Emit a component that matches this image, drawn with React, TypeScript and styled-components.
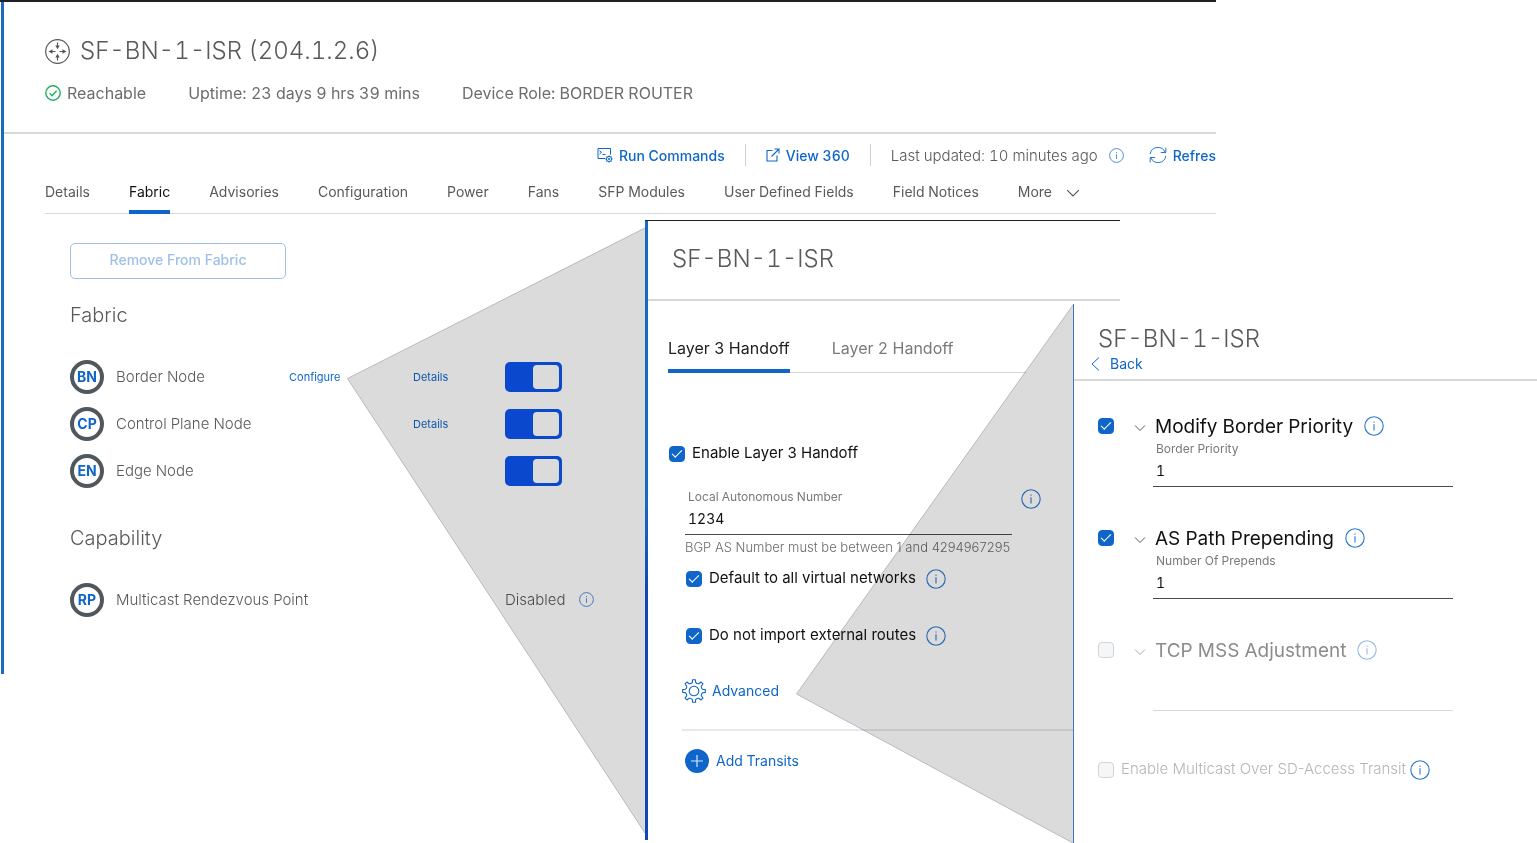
import React from 'react';
import styled, { createGlobalStyle, css } from 'styled-components';

const blue = '#0f66c8';

const Global = createGlobalStyle`
  *, *::before, *::after { box-sizing: border-box; }
  body {
    margin: 0;
    background: #fff;
    color: #58595b;
    font-family: Inter, "Liberation Sans", sans-serif;
    font-size: 14px;
    font-optical-sizing: none;
    font-variant-numeric: tabular-nums;
  }
  h1, h2, h3, p { margin: 0; font-weight: 300; }
  button, input { font: inherit; color: inherit; font-optical-sizing: none; font-variant-numeric: tabular-nums; }
  svg { display: block; flex: none; }
`;

const Canvas = styled.main`
  display: grid;
  grid-template-columns: minmax(0, 645fr) minmax(0, 428fr) minmax(0, 47fr) minmax(0, 96fr) minmax(0, 321fr);
  grid-template-rows: 220px 84px 1fr;
  min-height: 100vh;
  overflow: hidden;
`;

/* ---------- panels ---------- */
const DevicePanel = styled.section`
  grid-area: 1 / 1 / 4 / 5;
  align-self: start;
  border-top: 2px solid #1f1f24;
  overflow: hidden;
`;
const DeviceBody = styled.div`
  margin-left: 1px;
  border-left: 3px solid #1b69bc;
  min-height: 672px;
`;
const HandoffPanel = styled.section`
  grid-area: 2 / 2 / 4 / 4;
  border-top: 1px solid #1f1f24;
  margin-bottom: 3px;
`;
const HandoffBody = styled.div`
  height: 100%;
  padding-left: 3px;
  background: linear-gradient(#1b69bc 45%, #1046b8 60%) left / 3px 100% no-repeat;
`;
const AdvancedPanel = styled.section`
  grid-area: 3 / 3 / 4 / 6;
  z-index: 1;
  border-left: 1px solid #3a78c4;
`;
const Wedge = styled.svg<{ $row: string; $col: number; $top: number }>`
  grid-row: ${p => p.$row};
  grid-column: ${p => p.$col};
  justify-self: end;
  margin-top: ${p => p.$top}px;
  mix-blend-mode: multiply;
  pointer-events: none;
`;

/* ---------- device header ---------- */
const DeviceHeader = styled.header`
  height: 132px;
  padding: 34px 0 0 41px;
  border-bottom: 2px solid #d8d8da;
`;
const TitleRow = styled.div`
  display: flex;
  align-items: center;
  gap: 10px;
  height: 30px;
`;
const Title = styled.h1`
  font-size: 24px;
  line-height: 30px;
  white-space: nowrap;
`;
const StatusRow = styled.div`
  display: flex;
  align-items: center;
  gap: 42px;
  margin-top: 17px;
  color: #6b6d70;
  font-size: 16px;
  line-height: 20px;
  white-space: nowrap;
`;
const Status = styled.span`
  display: flex;
  align-items: center;
  gap: 6px;
`;
const Toolbar = styled.div`
  display: flex;
  justify-content: flex-end;
  align-items: center;
  height: 44px;
  padding-bottom: 2px;
  font-size: 14px;
  white-space: nowrap;
`;
const ToolButton = styled.button`
  display: flex;
  align-items: center;
  gap: 6px;
  padding: 0;
  border: 0;
  background: none;
  color: ${blue};
  font-weight: 500;
`;
const Rule = styled.span`
  width: 1px;
  height: 22px;
  margin: 0 20px;
  background: #d0d1d3;
`;
const Updated = styled.span`
  display: flex;
  align-items: center;
  gap: 11px;
  margin-right: 25px;
  color: #58595b;
  font-size: 15px;
  font-weight: 300;
`;
const Tabs = styled.nav`
  display: flex;
  gap: 39px;
  height: 36px;
  margin-left: 41px;
  border-bottom: 1px solid #d8d8da;
  white-space: nowrap;
`;
const Tab = styled.button<{ $active?: boolean }>`
  display: flex;
  align-items: flex-start;
  gap: 14px;
  height: 36px;
  padding: 5px 0 0;
  border: 0;
  border-bottom: ${p => (p.$active ? `4px solid ${blue}` : '0')};
  background: none;
  color: ${p => (p.$active ? '#111' : '#58595b')};
  font-size: 14px;
  line-height: 18px;
  svg { margin-top: 3px; }
`;

/* ---------- fabric content ---------- */
const Fabric = styled.div`
  width: 580px;
  padding: 29px 0 0 66px;
`;
const RemoveButton = styled.button`
  width: 216px;
  height: 36px;
  padding: 0 0 3px;
  border: 1px solid #9fc0e8;
  border-radius: 5px;
  background: #fff;
  color: #9fc0e8;
  font-size: 14px;
  font-weight: 500;
`;
const SectionTitle = styled.h2<{ $space: number }>`
  margin-top: ${p => p.$space}px;
  font-size: 20px;
  line-height: 24px;
`;
const NodeList = styled.div`
  display: grid;
  gap: 13px;
  margin-top: 33px;
`;
const NodeRow = styled.div`
  display: grid;
  grid-template-columns: 46px 173px 124px 92px auto;
  align-items: center;
  height: 34px;
  font-size: 15px;
  line-height: 18px;
  font-weight: 300;
  white-space: nowrap;
`;
const Cell = styled.span`
  padding-bottom: 1px;
`;
const Badge = styled.span`
  display: grid;
  place-items: center;
  width: 34px;
  height: 34px;
  border: 4px solid #50575d;
  border-radius: 50%;
  color: ${blue};
  font-size: 14px;
  font-weight: 700;
`;
const SmallLink = styled.a`
  display: block;
  color: ${blue};
  font-size: 11px;
  font-weight: 400;
  text-decoration: none;
`;
const Toggle = styled.input`
  appearance: none;
  width: 57px;
  height: 30px;
  margin: 0;
  padding: 3px;
  border-radius: 5px;
  background: #0b53f0;
  display: flex;
  justify-content: flex-end;
  &::before { content: ''; width: 26px; height: 24px; border-radius: 4px; background: #fff; }
`;
const Disabled = styled.span`
  display: flex;
  align-items: center;
  gap: 13px;
  padding-bottom: 1px;
`;

/* ---------- handoff and advanced panels ---------- */
const PanelHeader = styled.header<{ $h: number; $top: number }>`
  height: ${p => p.$h}px;
  padding: ${p => p.$top}px 0 0 24px;
  border-bottom: 2px solid #d8d8da;
`;
const HandoffContent = styled.div`
  padding: 36px 0 0 20px;
`;
const HandoffTabs = styled.nav`
  display: flex;
  gap: 42px;
  height: 36px;
  margin-right: 94px;
  border-bottom: 1px solid #d8d8da;
  white-space: nowrap;
`;
const HandoffTab = styled.button<{ $active?: boolean }>`
  display: flex;
  align-items: flex-start;
  height: 36px;
  padding: 1px 0 0;
  border: 0;
  border-bottom: ${p => (p.$active ? `4px solid ${blue}` : '0')};
  background: none;
  color: ${p => (p.$active ? '#222' : '#77797c')};
  font-size: 16px;
  line-height: 20px;
`;
const Check = styled.input`
  appearance: none;
  flex: none;
  width: 16px;
  height: 16px;
  margin: 0;
  border-radius: 4px;
  display: grid;
  place-items: center;
  border: 1px solid #d3d4d6;
  background: #f5f6f8;
  &:checked { border-color: ${blue}; background: ${blue}; }
  &:checked::before {
    content: '';
    width: 10px;
    height: 5px;
    margin-bottom: 3px;
    border: solid #fff;
    border-width: 0 0 1px 1px;
    rotate: -45deg;
  }
`;
const CheckLabel = styled.label<{ $dim?: boolean }>`
  display: flex;
  align-items: center;
  gap: 7px;
  color: ${p => (p.$dim ? '#b4b6bb' : '#111')};
  font-size: 15px;
  font-weight: ${p => (p.$dim ? 300 : 400)};
  font-variant-numeric: normal;
  line-height: 20px;
  white-space: nowrap;
`;
const LabelText = styled.span`
  padding-bottom: 2px;
`;
const CheckRow = styled.div<{ $mt: number; $inset?: number; $gap?: number }>`
  display: flex;
  align-items: center;
  gap: ${p => p.$gap ?? 10}px;
  margin-top: ${p => p.$mt}px;
  padding-left: ${p => p.$inset ?? 0}px;
  height: 20px;
`;
const FieldRow = styled.div`
  display: flex;
  align-items: flex-start;
  gap: 9px;
  margin: 25px 0 0 17px;
`;
const Field = styled.label<{ $w: number }>`
  display: block;
  width: ${p => p.$w}px;
  color: #77797c;
  font-size: 12px;
  line-height: 16px;
  white-space: nowrap;
  span { padding-left: 3px; }
`;
const TextInput = styled.input`
  display: block;
  width: 100%;
  height: 30px;
  padding: 0 3px 2px;
  border: 0;
  border-bottom: 1px solid #4a4b48;
  background: none;
  color: #111;
  font-size: 14px;
  &:disabled { border-color: #d8d8da; }
`;
const Hint = styled.p`
  width: 327px;
  padding-top: 4px;
  color: #6b6c6f;
  font-size: 13px;
  font-variant-numeric: normal;
  line-height: 16px;
  white-space: nowrap;
`;
const Action = styled.button<{ $mt: number; $inset: number; $gap: number }>`
  display: flex;
  align-items: center;
  gap: ${p => p.$gap}px;
  height: 24px;
  margin: ${p => p.$mt}px 0 0 ${p => p.$inset}px;
  padding: 0;
  border: 0;
  background: none;
  color: ${blue};
  font-size: 14px;
`;
const Divider = styled.hr`
  height: 2px;
  margin: 26px 47px 0 14px;
  border: 0;
  background: #e7e7ef;
`;
const Back = styled.button`
  display: flex;
  align-items: center;
  gap: 10px;
  margin-left: -7px;
  padding: 0;
  border: 0;
  background: none;
  color: ${blue};
  font-size: 14px;
  line-height: 20px;
`;
const Options = styled.div`
  padding: 33px 0 0 24px;
`;
const Option = styled.section<{ $dim?: boolean }>`
  height: 112px;
  ${p => p.$dim && css`svg { opacity: 0.5; }`}
`;
const OptionHead = styled.div`
  display: flex;
  align-items: center;
  height: 24px;
  margin-bottom: 3px;
`;
const OptionLabel = styled.label<{ $dim?: boolean }>`
  margin: 0 11px 0 9px;
  padding-top: 2px;
  color: ${p => (p.$dim ? '#8b8c8e' : '#111')};
  font-size: 19px;
  line-height: 24px;
  white-space: nowrap;
`;
const ChevronSlot = styled.span`
  margin-left: 20px;
  padding-top: 3px;
`;
const OptionField = styled.div`
  padding-left: 55px;
`;

/* ---------- icons ---------- */
const Info = ({ size = 20 }: { size?: number }) => (
  <svg width={size} height={size} viewBox="0 0 20 20" fill="none" stroke="#2b78cf" strokeWidth="1.1">
    <circle cx="10" cy="10" r="9.2" />
    <path d="M10 8.3v6.2M10 5.4v1.4" />
  </svg>
);
const Router = () => (
  <svg width="25" height="25" viewBox="0 0 25 25" fill="none" stroke="#55575a" strokeWidth="1.2">
    <circle cx="12.5" cy="12.5" r="11.8" />
    <path d="M12.5 3.5v4M12.5 17.5v4M7 12.5h3.5M14.5 12.5h3.5" />
    <path d="M10.3 6.5h4.4l-2.2 3.8zM10.3 18.5h4.4l-2.2-3.8zM7.5 10.3v4.4l-4-2.2zM17.5 10.3v4.4l4-2.2z" fill="#55575a" stroke="none" />
  </svg>
);
const Reach = () => (
  <svg width="16" height="16" viewBox="0 0 16 16" fill="none" stroke="#22b060" strokeWidth="1.4">
    <circle cx="8" cy="8" r="7.2" />
    <path d="M4.6 8.3l2.4 2.4 4.6-4.9" />
  </svg>
);
const Terminal = () => (
  <svg width="16" height="16" viewBox="0 0 16 16" fill="none" stroke={blue} strokeWidth="1">
    <path d="M8 11.5H1V1.5h12.5v6M2.5 3.8l2 1.6-2 1.6M5.5 7.5h3" />
    <circle cx="12" cy="12" r="2.6" />
    <circle cx="12" cy="12" r="0.8" />
    <path d="M12 8.4v1M12 14.6v1M8.4 12h1M14.6 12h1M9.5 9.5l.7.7M13.8 13.8l.7.7M14.5 9.5l-.7.7M10.2 13.8l-.7.7" />
  </svg>
);
const External = () => (
  <svg width="14" height="14" viewBox="0 0 14 14" fill="none" stroke={blue} strokeWidth="1.1">
    <path d="M6.5 2.5H1v10.5h10V7.5M8.5 1H13v4.5M13 1L5.5 8.5" />
  </svg>
);
const RefreshIcon = () => (
  <svg width="18" height="18" viewBox="0 0 18 18" fill="none" stroke={blue} strokeWidth="0.9">
    <path d="M1.2 8a7.8 7.8 0 0 1 15-1.5M16.8 10a7.8 7.8 0 0 1-15 1.5M16.8 1.5v5h-5M1.2 16.5v-5h5" />
  </svg>
);
const Chevron = ({ w = 12 }: { w?: number }) => (
  <svg width={w} height={w} viewBox="0 0 12 12" fill="none" stroke="#55575a" strokeWidth="1">
    <path d="M1 3.5l5 5 5-5" />
  </svg>
);
const ChevronLeft = () => (
  <svg width="9" height="14" viewBox="0 0 9 14" fill="none" stroke={blue} strokeWidth="1">
    <path d="M8 .5L1 7l7 6.5" />
  </svg>
);
const teeth = Array.from({ length: 8 }, (_, i) => {
  const at = (deg: number, r: number) => {
    const a = ((i * 45 + deg - 90) * Math.PI) / 180;
    return `${(12 + r * Math.cos(a)).toFixed(2)} ${(12 + r * Math.sin(a)).toFixed(2)}`;
  };
  return `${i ? 'L' : 'M'}${at(-7, 11.4)} L${at(7, 11.4)} L${at(11, 8.8)} Q${at(22.5, 7.4)} ${at(34, 8.8)}`;
}).join(' ');
const Gear = () => (
  <svg width="24" height="24" viewBox="0 0 24 24" fill="none" stroke={blue} strokeWidth="1.1" strokeLinejoin="round">
    <path d={`${teeth} Z`} />
    <circle cx="12" cy="12" r="4.8" />
  </svg>
);
const Plus = () => (
  <svg width="24" height="24" viewBox="0 0 24 24" fill="none">
    <circle cx="12" cy="12" r="12" fill={blue} />
    <path d="M12 6v12M6 12h12" stroke="#d5e5f7" strokeWidth="1.2" />
  </svg>
);

const tabs = ['Details', 'Fabric', 'Advisories', 'Configuration', 'Power', 'Fans', 'SFP Modules', 'User Defined Fields', 'Field Notices'];
const nodes = [
  { code: 'BN', name: 'Border Node', configure: true, details: true },
  { code: 'CP', name: 'Control Plane Node', configure: false, details: true },
  { code: 'EN', name: 'Edge Node', configure: false, details: false },
];
const options = [
  { id: 'priority', title: 'Modify Border Priority', field: 'Border Priority', value: '1', on: true },
  { id: 'prepend', title: 'AS Path Prepending', field: 'Number Of Prepends', value: '1', on: true },
  { id: 'mss', title: 'TCP MSS Adjustment', field: '', value: '', on: false },
];

export default function App() {
  return (
    <Canvas>
      <Global />
      <DevicePanel>
        <DeviceBody>
          <DeviceHeader>
            <TitleRow><Router /><Title>SF-BN-1-ISR (204.1.2.6)</Title></TitleRow>
            <StatusRow>
              <Status><Reach />Reachable</Status>
              <span>Uptime: 23 days 9 hrs 39 mins</span>
              <span>Device Role: BORDER ROUTER</span>
            </StatusRow>
          </DeviceHeader>
          <Toolbar>
            <ToolButton><Terminal />Run Commands</ToolButton>
            <Rule />
            <ToolButton><External />View 360</ToolButton>
            <Rule />
            <Updated>Last updated: 10 minutes ago<Info size={15} /></Updated>
            <ToolButton><RefreshIcon />Refres</ToolButton>
          </Toolbar>
          <Tabs>
            {tabs.map(t => <Tab key={t} $active={t === 'Fabric'}>{t}</Tab>)}
            <Tab>More <Chevron w={14} /></Tab>
          </Tabs>
          <Fabric>
            <RemoveButton>Remove From Fabric</RemoveButton>
            <SectionTitle $space={24}>Fabric</SectionTitle>
            <NodeList>
              {nodes.map(n => (
                <NodeRow key={n.code}>
                  <Badge>{n.code}</Badge>
                  <Cell>{n.name}</Cell>
                  <Cell>{n.configure && <SmallLink href="#configure">Configure</SmallLink>}</Cell>
                  <Cell>{n.details && <SmallLink href="#details">Details</SmallLink>}</Cell>
                  <Toggle type="checkbox" defaultChecked aria-label={n.name} />
                </NodeRow>
              ))}
            </NodeList>
            <SectionTitle $space={38}>Capability</SectionTitle>
            <NodeList>
              <NodeRow>
                <Badge>RP</Badge>
                <Cell>Multicast Rendezvous Point</Cell>
                <span /><span />
                <Disabled>Disabled <Info size={15} /></Disabled>
              </NodeRow>
            </NodeList>
          </Fabric>
        </DeviceBody>
      </DevicePanel>

      <HandoffPanel>
        <HandoffBody>
          <PanelHeader $h={80} $top={23}><Title as="h2">SF-BN-1-ISR</Title></PanelHeader>
          <HandoffContent>
            <HandoffTabs>
              <HandoffTab $active>Layer 3 Handoff</HandoffTab>
              <HandoffTab>Layer 2 Handoff</HandoffTab>
            </HandoffTabs>
            <CheckRow $mt={71} $inset={1}>
              <CheckLabel><Check type="checkbox" defaultChecked /><LabelText>Enable Layer 3 Handoff</LabelText></CheckLabel>
            </CheckRow>
            <FieldRow>
              <div>
                <Field $w={327}><span>Local Autonomous Number</span><TextInput defaultValue="1234" /></Field>
                <Hint>BGP AS Number must be between 1 and 4294967295</Hint>
              </div>
              <Info />
            </FieldRow>
            <CheckRow $mt={14} $inset={18}>
              <CheckLabel><Check type="checkbox" defaultChecked /><LabelText>Default to all virtual networks</LabelText></CheckLabel><Info />
            </CheckRow>
            <CheckRow $mt={37} $inset={18}>
              <CheckLabel><Check type="checkbox" defaultChecked /><LabelText>Do not import external routes</LabelText></CheckLabel><Info />
            </CheckRow>
            <Action $mt={33} $inset={14} $gap={6}><Gear /><LabelText>Advanced</LabelText></Action>
            <Divider />
            <Action $mt={18} $inset={17} $gap={7}><Plus /><LabelText>Add Transits</LabelText></Action>
          </HandoffContent>
        </HandoffBody>
      </HandoffPanel>

      <AdvancedPanel>
        <PanelHeader $h={77} $top={20}>
          <Title as="h2">SF-BN-1-ISR</Title>
          <Back><ChevronLeft />Back</Back>
        </PanelHeader>
        <Options>
          {options.map(o => (
            <Option key={o.id} $dim={!o.on}>
              <OptionHead>
                <Check id={o.id} type="checkbox" defaultChecked={o.on} disabled={!o.on} />
                <ChevronSlot><Chevron /></ChevronSlot>
                <OptionLabel htmlFor={o.id} $dim={!o.on}>{o.title}</OptionLabel>
                <Info />
              </OptionHead>
              <OptionField>
                <Field $w={300}>
                  <span>{o.field || '\u00a0'}</span>
                  <TextInput defaultValue={o.value} disabled={!o.on} aria-label={o.field || o.title} />
                </Field>
              </OptionField>
            </Option>
          ))}
          <CheckRow $mt={10} $gap={4}>
            <CheckLabel $dim><Check type="checkbox" disabled /><LabelText>Enable Multicast Over SD-Access Transit</LabelText></CheckLabel><Info />
          </CheckRow>
        </Options>
      </AdvancedPanel>

      <Wedge $row="2 / 4" $col={1} $top={7} width="298" height="610" viewBox="0 0 298 610">
        <path d="M.5 151.5L298 1V606z" fill="#dbdbdb" />
        <path d="M298 1L.5 151.5 298 606" fill="none" stroke="#b9b9b9" />
      </Wedge>
      <Wedge $row="3" $col={2} $top={0} width="277" height="539" viewBox="0 0 277 539">
        <path d="M.5 390L277 1V539z" fill="#dbdbdb" />
        <path d="M277 1L.5 390 277 539" fill="none" stroke="#b9b9b9" />
      </Wedge>
    </Canvas>
  );
}
